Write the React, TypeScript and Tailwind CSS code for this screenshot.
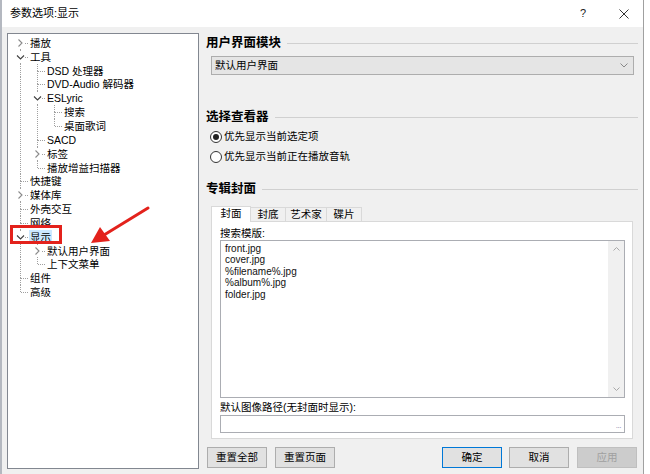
import React from "react";

type Row = {
  t: string;
  l: number;
  k?: "open" | "closed";
  g?: boolean[];
  last?: boolean;
  first?: boolean;
  sel?: boolean;
};

const rows: Row[] = [
  { t: "播放", l: 0, k: "closed", first: true },
  { t: "工具", l: 0, k: "open" },
  { t: "DSD 处理器", l: 1, g: [true] },
  { t: "DVD-Audio 解码器", l: 1, g: [true] },
  { t: "ESLyric", l: 1, k: "open", g: [true] },
  { t: "搜索", l: 2, g: [true, true] },
  { t: "桌面歌词", l: 2, g: [true, true], last: true },
  { t: "SACD", l: 1, g: [true] },
  { t: "标签", l: 1, k: "closed", g: [true] },
  { t: "播放增益扫描器", l: 1, g: [true], last: true },
  { t: "快捷键", l: 0 },
  { t: "媒体库", l: 0, k: "closed" },
  { t: "外壳交互", l: 0 },
  { t: "网络", l: 0 },
  { t: "显示", l: 0, k: "open", sel: true },
  { t: "默认用户界面", l: 1, k: "closed", g: [true] },
  { t: "上下文菜单", l: 1, g: [true], last: true },
  { t: "组件", l: 0 },
  { t: "高级", l: 0, last: true },
];

const font = { fontFamily: '"Liberation Sans", "Noto Sans CJK SC", sans-serif' };
const dot = "#a0a0a0";

function Guide({ on }: { on: boolean }) {
  return (
    <svg width="17" height="14" className="shrink-0">
      {on && <line x1="8.5" y1="0" x2="8.5" y2="14" stroke={dot} strokeDasharray="1 1" />}
    </svg>
  );
}

function Own({ r }: { r: Row }) {
  return (
    <svg width="17" height="14" className="shrink-0">
      {!r.first && <line x1="8.5" y1="0" x2="8.5" y2="7" stroke={dot} strokeDasharray="1 1" />}
      {!r.last && <line x1="8.5" y1="7" x2="8.5" y2="14" stroke={dot} strokeDasharray="1 1" />}
      <line x1="9" y1="7.5" x2="17" y2="7.5" stroke={dot} strokeDasharray="1 1" />
      {r.k && <rect x="3" y="2" width="10" height="10" fill="white" />}
      {r.k === "closed" && (
        <polyline points="6.5,3.5 10,7 6.5,10.5" fill="none" stroke="#8a8a8a" strokeWidth="1.1" />
      )}
      {r.k === "open" && (
        <polyline points="5,5.5 8.5,9 12,5.5" fill="none" stroke="#404040" strokeWidth="1.1" />
      )}
    </svg>
  );
}

function Tree() {
  return (
    <div className="ml-[5px] w-[192px] h-[436px] border border-[#828790] bg-white pl-[4px] pt-[2px] text-[10.5px] text-black">
      {rows.map((r, i) => (
        <div key={i} className="flex h-[13.85px] items-center">
          {(r.g ?? []).map((v, j) => (
            <Guide key={j} on={v} />
          ))}
          <Own r={r} />
          <span
            className={`px-[1px] leading-[14px] whitespace-nowrap ${r.sel ? "bg-[#cce8ff]" : ""}`}
          >
            {r.t}
          </span>
        </div>
      ))}
    </div>
  );
}

function Heading({ text }: { text: string }) {
  return (
    <div className="flex items-center h-[20px]">
      <span className="text-[12.5px] font-bold text-black whitespace-nowrap">{text}</span>
      <div className="flex-1 ml-[6px] h-px bg-[#d0d0d0]" />
    </div>
  );
}

function Radio({ on, label }: { on: boolean; label: string }) {
  return (
    <div className="flex items-center h-[20px] pl-[4px]">
      <span className="w-[12px] h-[12px] rounded-full border border-[#333] bg-white flex items-center justify-center">
        {on && <span className="w-[6px] h-[6px] rounded-full bg-[#222]" />}
      </span>
      <span className="ml-[2px] text-[10.5px] text-black">{label}</span>
    </div>
  );
}

function Btn({ children, kind }: { children: React.ReactNode; kind?: "primary" | "disabled" }) {
  const cls =
    kind === "primary"
      ? "border-[#0078d7] bg-[#e1e1e1] text-black"
      : kind === "disabled"
      ? "border-[#bfbfbf] bg-[#cccccc] text-[#a0a0a0]"
      : "border-[#adadad] bg-[#e1e1e1] text-black";
  return (
    <div className={`w-[60px] h-[21px] border flex items-center justify-center text-[10.5px] ${cls}`}>
      {children}
    </div>
  );
}

export default function App() {
  return (
    <div className="relative w-[650px] h-[474px] bg-white overflow-hidden" style={font}>
      <div className="w-[644px] h-full flex flex-col border-l-2 border-l-[#b4b8c0] border-r border-r-[#a0a0a0]">
        {/* title bar */}
        <div className="h-[27px] bg-white flex items-center shrink-0">
          <span className="ml-[8px] text-[11px] text-black">参数选项:显示</span>
          <span className="ml-auto text-[11px] text-[#222] mr-[33px]">?</span>
          <svg width="10" height="10" className="mr-[14px]">
            <path d="M0.5 0.5 L9.5 9.5 M9.5 0.5 L0.5 9.5" stroke="#333" strokeWidth="1" />
          </svg>
        </div>

        {/* body */}
        <div className="flex-1 bg-[#f0f0f0] flex pt-[6px]">
          <Tree />

          <div className="ml-[7px] w-[432px] flex flex-col">
            <Heading text="用户界面模块" />
            <div className="mt-[3px] ml-[5px] w-[423px] h-[19px] border border-[#adadad] bg-[#e5e5e5] flex items-center pl-[3px] pr-[5px]">
              <span className="text-[10.5px] text-black">默认用户界面</span>
              <svg width="8" height="5" className="ml-auto">
                <polyline points="0.5,0.5 4,4 7.5,0.5" fill="none" stroke="#888" />
              </svg>
            </div>

            <div className="mt-[32px]">
              <Heading text="选择查看器" />
            </div>
            <Radio on label="优先显示当前选定项" />
            <Radio on={false} label="优先显示当前正在播放音轨" />

            <div className="mt-[12px]">
              <Heading text="专辑封面" />
            </div>

            {/* tabs */}
            <div className="mt-[6px] ml-[5px] flex items-end h-[16px] text-[10.5px] text-black">
              <div className="w-[40px] h-[16px] bg-white border border-b-0 border-[#d9d9d9] flex items-center justify-center relative z-10 -mb-px pb-[1px]">
                封面
              </div>
              <div className="w-[35px] h-[14px] bg-[#f0f0f0] border border-l-0 border-b-0 border-[#d9d9d9] flex items-center justify-center">
                封底
              </div>
              <div className="w-[41px] h-[14px] bg-[#f0f0f0] border border-l-0 border-b-0 border-[#d9d9d9] flex items-center justify-center">
                艺术家
              </div>
              <div className="w-[35px] h-[14px] bg-[#f0f0f0] border border-l-0 border-b-0 border-[#d9d9d9] flex items-center justify-center">
                碟片
              </div>
            </div>
            <div className="ml-[5px] w-[422px] h-[218px] bg-white border border-[#d9d9d9] pl-[8px] pt-[4px] flex flex-col">
              <div className="h-[14px] text-[10.5px] text-black leading-[14px]">搜索模版:</div>
              <div className="w-[405px] h-[158px] border border-[#abadb3] bg-white flex">
                <div className="flex-1 pl-[4px] pt-[2px] text-[10px] leading-[11.4px] text-[#111]">
                  <div>front.jpg</div>
                  <div>cover.jpg</div>
                  <div>%filename%.jpg</div>
                  <div>%album%.jpg</div>
                  <div>folder.jpg</div>
                </div>
                <div className="w-[16px] bg-[#f0f0f0] flex flex-col items-center justify-between py-[6px]">
                  <svg width="7" height="4">
                    <polyline points="0.5,3.5 3.5,0.5 6.5,3.5" fill="none" stroke="#a8a8a8" />
                  </svg>
                  <svg width="7" height="4">
                    <polyline points="0.5,0.5 3.5,3.5 6.5,0.5" fill="none" stroke="#a8a8a8" />
                  </svg>
                </div>
              </div>
              <div className="h-[16px] mt-[1px] text-[10.5px] text-black leading-[16px]">
                默认图像路径(无封面时显示):
              </div>
              <div className="w-[405px] h-[18px] border border-[#abadb3] bg-white flex items-end justify-end pr-[3px] pb-[2px]">
                <span className="text-[8px] leading-[8px] text-[#8080a8] tracking-[-0.5px]">...</span>
              </div>
            </div>

            {/* buttons */}
            <div className="mt-[8px] ml-[1px] flex">
              <Btn>重置全部</Btn>
              <div className="ml-[8px]">
                <Btn>重置页面</Btn>
              </div>
              <div className="ml-[107px]">
                <Btn kind="primary">确定</Btn>
              </div>
              <div className="ml-[7px]">
                <Btn>取消</Btn>
              </div>
              <div className="ml-[8px]">
                <Btn kind="disabled">应用</Btn>
              </div>
            </div>
          </div>
        </div>
      </div>

      {/* annotation overlay */}
      <div className="absolute left-[10px] top-[225px] w-[52px] h-[19px] border-[3px] border-[#e3221c]" />
      <svg className="absolute left-0 top-0" width="650" height="474" style={{ pointerEvents: "none" }}>
        <line x1="148" y1="208" x2="104" y2="235" stroke="#e3221c" strokeWidth="3" strokeLinecap="round" />
        <polygon points="91,243 100,227 110,241" fill="#e3221c" />
      </svg>
    </div>
  );
}
